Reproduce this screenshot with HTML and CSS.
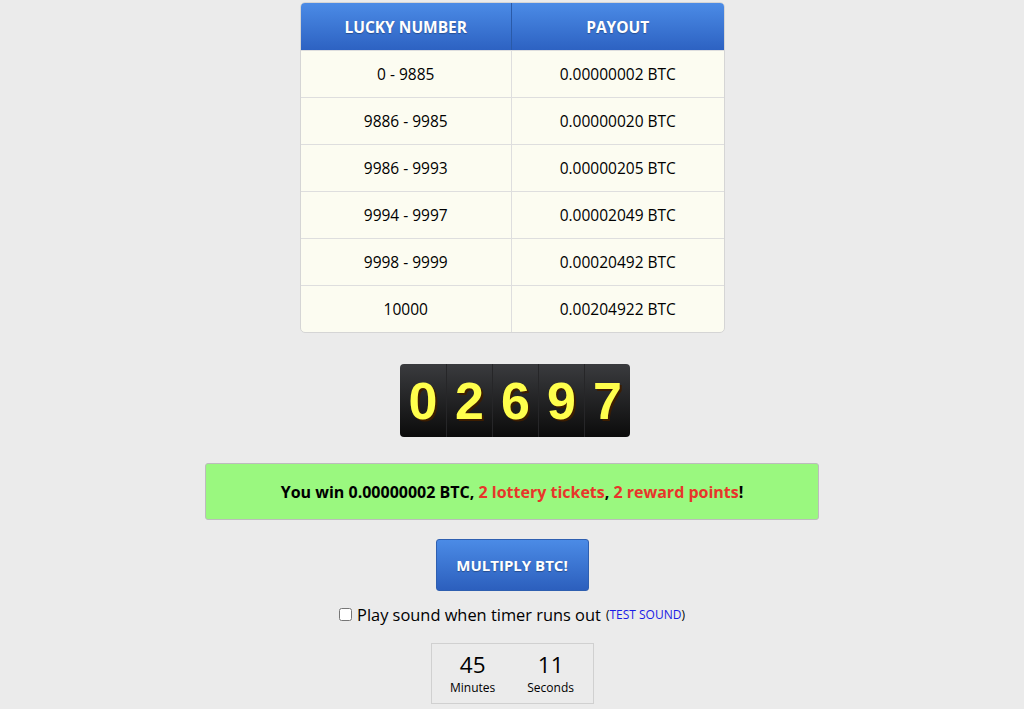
FILE: index.html
```html
<!DOCTYPE html>
<html lang="en">

<head>
    <meta charset="UTF-8">
    <meta name="viewport" content="width=device-width, initial-scale=1.0">
    <title>Free BTC</title>
    <link rel="stylesheet" href="styles.css">
</head>

<body>
    <div class="wrapper">
        <table class="payout-table">
            <thead>
                <tr>
                    <th>LUCKY NUMBER</th>
                    <th>PAYOUT</th>
                </tr>
            </thead>
            <tbody>
                <tr><td>0 - 9885</td><td>0.00000002 BTC</td></tr>
                <tr><td>9886 - 9985</td><td>0.00000020 BTC</td></tr>
                <tr><td>9986 - 9993</td><td>0.00000205 BTC</td></tr>
                <tr><td>9994 - 9997</td><td>0.00002049 BTC</td></tr>
                <tr><td>9998 - 9999</td><td>0.00020492 BTC</td></tr>
                <tr><td>10000</td><td>0.00204922 BTC</td></tr>
            </tbody>
        </table>

        <div class="roll">
            <span class="digit">0</span>
            <span class="digit">2</span>
            <span class="digit">6</span>
            <span class="digit">9</span>
            <span class="digit">7</span>
        </div>

        <div class="win-box">
            <p>You win 0.00000002 BTC, <span class="red">2 lottery tickets</span>, <span class="red">2 reward points</span>!</p>
        </div>

        <button class="multiply-btn">MULTIPLY BTC!</button>

        <label class="sound-option">
            <input type="checkbox"> Play sound when timer runs out <span class="small">(<a href="#">TEST SOUND</a>)</span>
        </label>

        <div class="timer">
            <div class="timer-unit">
                <span class="timer-num">45</span>
                <span class="timer-label">Minutes</span>
            </div>
            <div class="timer-unit">
                <span class="timer-num">11</span>
                <span class="timer-label">Seconds</span>
            </div>
        </div>
    </div>
</body>

</html>
```

FILE: styles.css
```css
* {
    padding: 0;
    margin: 0;
    box-sizing: border-box;
    font-family: "Open Sans", sans-serif;
}

body {
    background: #ebebeb;
    color: #000000;
}

.wrapper {
    display: flex;
    flex-direction: column;
    align-items: center;
    padding-top: 2px;
}

/* payout table */
.payout-table {
    width: 425px;
    table-layout: fixed;
    border-collapse: separate;
    border-spacing: 0;
    border: 1px solid #d5d5d5;
    border-radius: 5px;
    overflow: hidden;
    background: #fcfcf1;
}

.payout-table th {
    width: 50%;
    height: 47px;
    color: #ffffff;
    font-size: 15.5px;
    font-weight: 700;
    background: linear-gradient(#4b8be6, #2d62c2);
    border-right: 1px solid #2a5aa8;
    text-shadow: 0 1px 1px rgba(0, 0, 0, 0.3);
}

.payout-table td {
    height: 47px;
    text-align: center;
    font-size: 15.5px;
    border-top: 1px solid #dedede;
    border-right: 1px solid #dedede;
}

.payout-table th:last-child,
.payout-table td:last-child {
    border-right: none;
}

/* rolled number */
.roll {
    margin-top: 31px;
    margin-left: 6px;
    display: flex;
    background: linear-gradient(#3a3b3e, #0b0b0b);
    border-radius: 4px;
}

.digit {
    width: 46px;
    height: 73px;
    display: flex;
    align-items: center;
    justify-content: center;
    font-family: "Liberation Sans", Arial, sans-serif;
    font-weight: 700;
    font-size: 52px;
    color: #ffff4c;
    text-shadow: 2px 2px 0 #3d1d00;
    border-left: 1px solid #262628;
}

.digit:first-child {
    border-left: none;
}

/* result */
.win-box {
    margin-top: 26px;
    width: 614px;
    height: 57px;
    display: flex;
    align-items: center;
    justify-content: center;
    background: #9af87f;
    border: 1px solid #bcbcbc;
    border-radius: 3px;
    font-size: 16px;
    font-weight: 700;
}

.red {
    color: #e8352a;
}

.multiply-btn {
    margin-top: 19px;
    width: 153px;
    height: 52px;
    border: 1px solid #2e5fb0;
    border-radius: 3px;
    background: linear-gradient(#4b8be6, #2c5fbd);
    color: #ffffff;
    font-size: 15px;
    font-weight: 700;
    text-shadow: 0 1px 1px rgba(0, 0, 0, 0.3);
}

.sound-option {
    margin-top: 12px;
    font-size: 16.4px;
    display: flex;
    align-items: center;
    gap: 4px;
}

.sound-option input {
    width: 13px;
    height: 13px;
    margin-right: 1px;
}

.small {
    font-size: 12px;
    margin-left: 1px;
}

.small a {
    color: #1a1ae6;
    text-decoration: none;
}

/* countdown */
.timer {
    margin-top: 17px;
    width: 163px;
    height: 61px;
    display: flex;
    justify-content: center;
    gap: 32px;
    border: 1px solid #d0d0d0;
    padding-top: 5px;
}

.timer-unit {
    display: flex;
    flex-direction: column;
    align-items: center;
}

.timer-num {
    font-size: 22.5px;
    line-height: 31px;
}

.timer-label {
    font-size: 12px;
    line-height: 16px;
}
```
